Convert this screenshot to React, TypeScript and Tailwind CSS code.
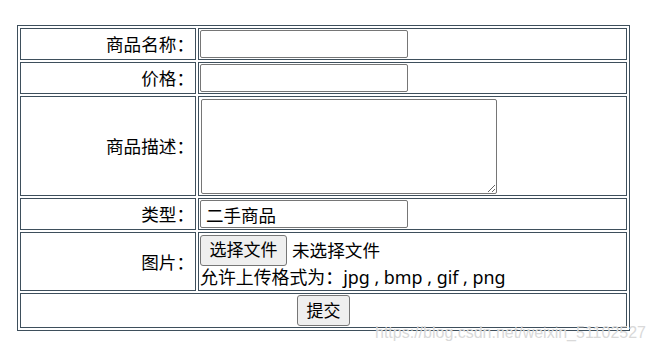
import React from 'react';

const font = { fontFamily: '"Noto Sans", "Noto Sans CJK SC", sans-serif' };

export default function App() {
  const label = 'border border-[#3e4f5c] p-px text-right align-middle leading-[24px]';
  const field = 'border border-[#3e4f5c] p-px align-middle';
  const input =
    'block h-[28px] w-[208px] rounded-[2px] border border-[#767676] bg-white px-[5px] text-[17.5px] leading-[22px] text-black outline-none';
  const button =
    'rounded-[3px] border border-[#767676] bg-[#efefef] text-[17px] leading-[22px] text-black';

  return (
    <div className="relative h-[352px] w-[656px] bg-white pl-[17px] pt-[25px] text-[17.6px] text-black" style={font}>
      <table className="border-separate border-spacing-[2px] border border-[#3e4f5c]">
        <tbody>
          <tr className="h-[32px]">
            <td className={`${label} w-[176px]`}>商品名称：</td>
            <td className={`${field} w-[429px]`}>
              <input className={input} type="text" />
            </td>
          </tr>
          <tr className="h-[32px]">
            <td className={label}>价格：</td>
            <td className={field}>
              <input className={input} type="text" />
            </td>
          </tr>
          <tr className="h-[100px]">
            <td className={label}>商品描述：</td>
            <td className={field}>
              <textarea className="ml-px block h-[95px] w-[296px] resize rounded-[2px] border border-[#767676] bg-white outline-none" />
            </td>
          </tr>
          <tr className="h-[32px]">
            <td className={label}>类型：</td>
            <td className={field}>
              <input className={input} type="text" defaultValue="二手商品" />
            </td>
          </tr>
          <tr className="h-[59px]">
            <td className={label}>图片：</td>
            <td className={field}>
              <div className="flex items-center">
                <button className={`${button} h-[31px] w-[87px]`}>选择文件</button>
                <span className="ml-[5px] leading-[22px]">未选择文件</span>
              </div>
              <div className="text-[17.9px] leading-[23px]">允许上传格式为：jpg , bmp , gif , png</div>
            </td>
          </tr>
          <tr className="h-[35px]">
            <td colSpan={2} className={`${field} text-center`}>
              <button className={`${button} h-[31px] w-[53px]`}>提交</button>
            </td>
          </tr>
        </tbody>
      </table>
      <div
        className="pointer-events-none absolute left-[375px] top-[323px] whitespace-nowrap text-[16px] leading-[20px] text-[#d9d9d9]"
        style={{ fontFamily: '"Liberation Sans", Arial, sans-serif' }}
      >
        https://blog.csdn.net/weixin_51102527
      </div>
    </div>
  );
}
